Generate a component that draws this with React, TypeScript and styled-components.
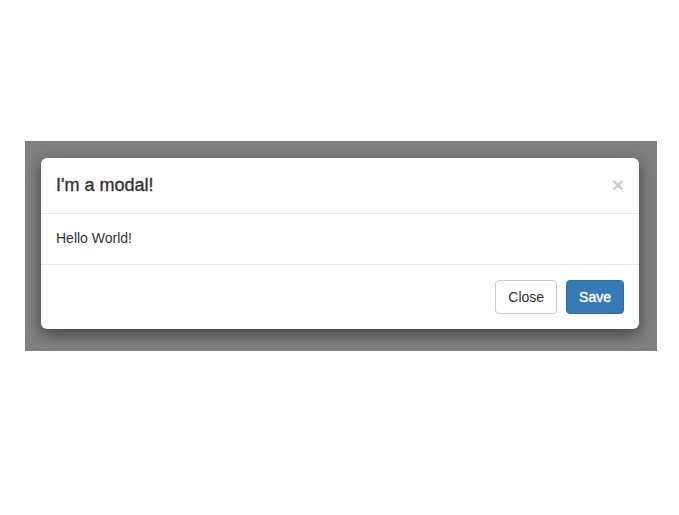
import React from 'react';
import styled, { createGlobalStyle } from 'styled-components';

const GlobalStyle = createGlobalStyle`
  html, body {
    margin: 0;
    padding: 0;
    background: #fff;
    font-family: "Liberation Sans", Arial, sans-serif;
    font-size: 14px;
    line-height: 1.42857;
    color: #333;
  }
`;

const Page = styled.div`
  width: 679px;
  height: 515px;
  padding: 141px 22px 0 25px;
  box-sizing: border-box;
`;

const Backdrop = styled.div`
  background: #808080;
  padding: 17px 18px 23px 16px;
  height: 210px;
  box-sizing: border-box;
`;

const Dialog = styled.div`
  background: #fff;
  border-radius: 6px;
  box-shadow: 0 5px 15px rgba(0, 0, 0, 0.5);
  background-clip: padding-box;
`;

const Header = styled.div`
  display: flex;
  align-items: flex-start;
  justify-content: space-between;
  padding: 15px;
  border-bottom: 1px solid #e5e5e5;
`;

const Title = styled.h4`
  margin: 0;
  font-size: 18px;
  font-weight: 500;
  line-height: 25px;
  color: #333;
  -webkit-text-stroke: 0.35px #333;
`;

const CloseX = styled.button`
  padding: 0;
  margin-top: 1px;
  border: 0;
  background: transparent;
  font-family: "Liberation Sans", Arial, sans-serif;
  font-size: 21px;
  font-weight: bold;
  line-height: 1;
  color: #000;
  opacity: 0.2;
  cursor: pointer;
`;

const Body = styled.div`
  padding: 15px;
`;

const Footer = styled.div`
  display: flex;
  justify-content: flex-end;
  gap: 9px;
  padding: 15px;
  border-top: 1px solid #e5e5e5;
`;

const Button = styled.button<{ $primary?: boolean }>`
  padding: 6px 12px;
  font-family: "Liberation Sans", Arial, sans-serif;
  font-size: 14px;
  line-height: 20px;
  border-radius: 4px;
  border: 1px solid ${(p) => (p.$primary ? '#2e6da4' : '#ccc')};
  background: ${(p) => (p.$primary ? '#337ab7' : '#fff')};
  color: ${(p) => (p.$primary ? '#fff' : '#333')};
  -webkit-text-stroke: ${(p) => (p.$primary ? '0.4px #fff' : '0')};
  cursor: pointer;
`;

export default function App() {
  return (
    <>
      <GlobalStyle />
      <Page>
        <Backdrop>
          <Dialog>
            <Header>
              <Title>I'm a modal!</Title>
              <CloseX aria-label="Close">×</CloseX>
            </Header>
            <Body>Hello World!</Body>
            <Footer>
              <Button>Close</Button>
              <Button $primary>Save</Button>
            </Footer>
          </Dialog>
        </Backdrop>
      </Page>
    </>
  );
}
